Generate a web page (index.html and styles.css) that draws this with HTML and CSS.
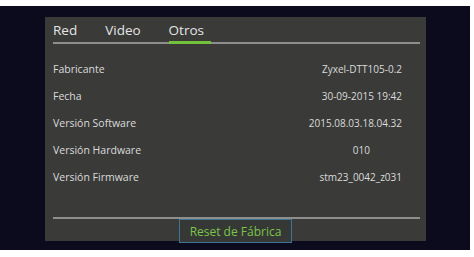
FILE: index.html
```html
<!DOCTYPE HTML>
<html lang="es">
  <head>
    <title>Otros</title>
    <meta charset="utf-8">
    <link rel="stylesheet" href="styles.css">
  </head>
  <body>

  <div class="screen">
    <div class="panel">
      <div class="tabs">
        <span class="tab">Red</span>
        <span class="tab">Video</span>
        <span class="tab active">Otros</span>
      </div>

      <div class="rows">
        <div class="row"><span>Fabricante</span><span class="value">Zyxel-DTT105-0.2</span></div>
        <div class="row"><span>Fecha</span><span class="value">30-09-2015 19:42</span></div>
        <div class="row"><span>Versión Software</span><span class="value">2015.08.03.18.04.32</span></div>
        <div class="row"><span>Versión Hardware</span><span class="value short">010</span></div>
        <div class="row"><span>Versión Firmware</span><span class="value">stm23_0042_z031</span></div>
      </div>

      <div class="footer">
        <button class="reset">Reset de Fábrica</button>
      </div>
    </div>
  </div>

  </body>
</html>
```

FILE: styles.css
```css
html {
  height: 100%;
}
body {
  margin: 0;
  padding: 0;
  background: #ffffff;
  font-family: "Open Sans", "Noto Sans", sans-serif;
  color: #dcdcdc;
}

.screen {
  box-sizing: border-box;
  margin-top: 6px;
  width: 470px;
  height: 244px;
  padding: 11px 0 0 45px;
  background: #0b0b1d;
}

.panel {
  box-sizing: border-box;
  width: 381px;
  height: 224px;
  padding: 0 6px 0 8px;
  background: #3a3b39;
  display: flex;
  flex-direction: column;
}

.tabs {
  display: flex;
  align-items: flex-end;
  gap: 28px;
  height: 25px;
  border-bottom: 2px solid #8e8e8c;
}

.tab {
  font-size: 13.5px;
  line-height: 18px;
  color: #e4e4e4;
  padding-bottom: 2px;
  border-bottom: 3px solid transparent;
  margin-bottom: -2px;
}

.tab.active {
  padding-right: 7px;
  border-bottom-color: #72c23c;
}

.rows {
  padding: 12px 18px 0 0;
}

.row {
  display: flex;
  justify-content: space-between;
  font-size: 10.5px;
  line-height: 27px;
  color: #dadada;
}

.row .value {
  font-size: 10px;
}

.row .short {
  padding-right: 32px;
}

.footer {
  margin-top: auto;
  margin-bottom: -2px;
  border-top: 2px solid #8e8e8c;
  display: flex;
  justify-content: center;
}

.reset {
  width: 113px;
  height: 24px;
  margin-left: -8px;
  margin-right: -6px;
  padding: 0;
  background: #363836;
  border: 1px solid #3d7493;
  color: #7cc44a;
  font-family: "Open Sans", "Noto Sans", sans-serif;
  font-size: 12px;
}
```
